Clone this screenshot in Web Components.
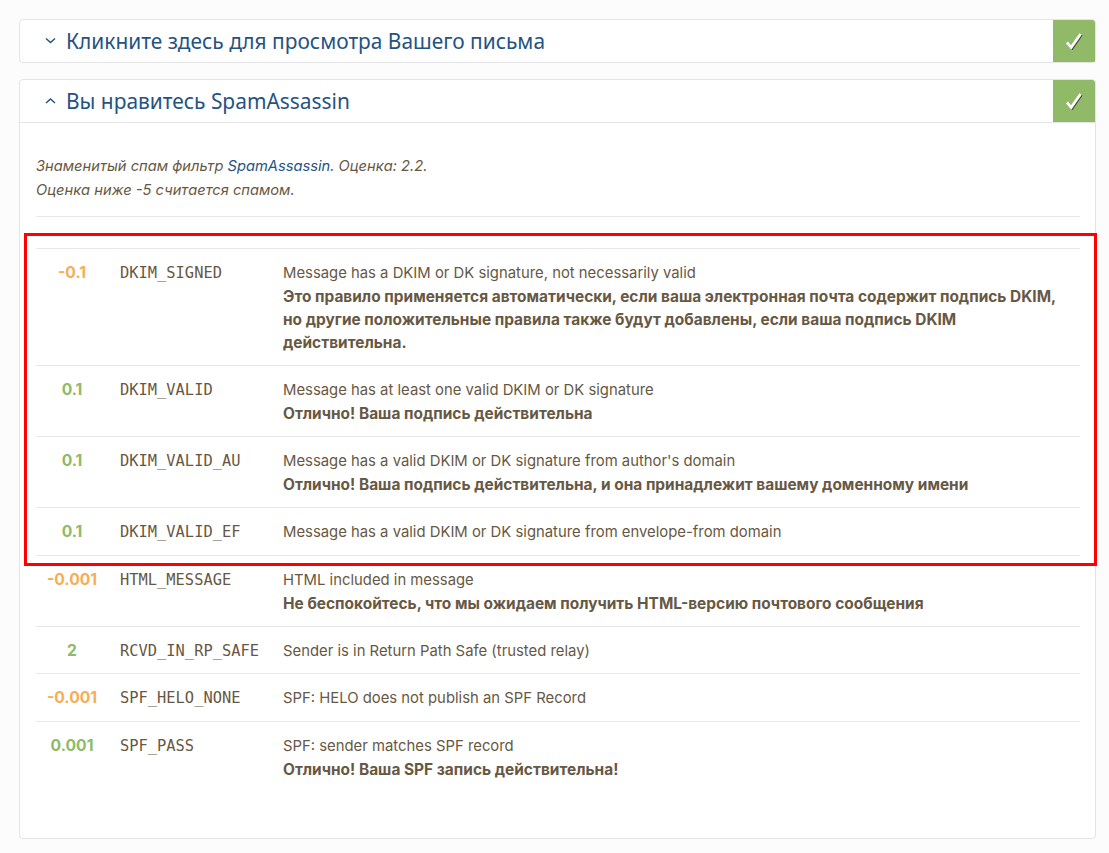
<!DOCTYPE html>
<html lang="ru">
<head>
<meta charset="utf-8">
<title>SpamAssassin</title>
<style>
  html, body { margin: 0; background: #fcfcfc; }
  body {
    height: 853px;
    overflow: hidden;
    font-family: Inter, "Liberation Sans", sans-serif;
    color: #675843;
  }
</style>
</head>
<body>
<test-page>
  <test-panel title="Кликните здесь для просмотра Вашего письма" collapsed></test-panel>
  <test-panel title="Вы нравитесь SpamAssassin">
    <score-intro>
      Знаменитый спам фильтр <a>SpamAssassin</a>. Оценка: 2.2.<br>
      Оценка ниже -5 считается спамом.
    </score-intro>
    <score-table>
      <score-row score="-0.1" rule="DKIM_SIGNED">
        Message has a DKIM or DK signature, not necessarily valid
        <b slot="note">Это правило применяется автоматически, если ваша электронная почта содержит подпись DKIM, но другие положительные правила также будут добавлены, если ваша подпись DKIM действительна.</b>
      </score-row>
      <score-row score="0.1" rule="DKIM_VALID">
        Message has at least one valid DKIM or DK signature
        <b slot="note">Отлично! Ваша подпись действительна</b>
      </score-row>
      <score-row score="0.1" rule="DKIM_VALID_AU">
        Message has a valid DKIM or DK signature from author's domain
        <b slot="note">Отлично! Ваша подпись действительна, и она принадлежит вашему доменному имени</b>
      </score-row>
      <score-row score="0.1" rule="DKIM_VALID_EF">
        Message has a valid DKIM or DK signature from envelope-from domain
      </score-row>
      <score-row score="-0.001" rule="HTML_MESSAGE">
        HTML included in message
        <b slot="note">Не беспокойтесь, что мы ожидаем получить HTML-версию почтового сообщения</b>
      </score-row>
      <score-row score="2" rule="RCVD_IN_RP_SAFE" tight>
        Sender is in Return Path Safe (trusted relay)
      </score-row>
      <score-row score="-0.001" rule="SPF_HELO_NONE">
        SPF: HELO does not publish an SPF Record
      </score-row>
      <score-row score="0.001" rule="SPF_PASS" last>
        SPF: sender matches SPF record
        <b slot="note">Отлично! Ваша SPF запись действительна!</b>
      </score-row>
    </score-table>
  </test-panel>
  <red-outline></red-outline>
</test-page>

<script>
class TestPage extends HTMLElement {
  constructor() {
    super();
    this.attachShadow({ mode: "open" });
    this.shadowRoot.innerHTML = `
      <style>
        :host {
          display: flex;
          flex-direction: column;
          gap: 16px;
          position: relative;
          padding: 19px 13px 0 19px;
        }
      </style>
      <slot></slot>
    `;
  }
}

class TestPanel extends HTMLElement {
  constructor() {
    super();
    this.attachShadow({ mode: "open" });
  }

  connectedCallback() {
    const title = this.getAttribute("title") || "";
    const collapsed = this.hasAttribute("collapsed");
    // chevron points down when closed, up when open
    const chevron = collapsed ? "M1 1.5l4.5 4 4.5-4" : "M1 6l4.5-4 4.5 4";

    this.shadowRoot.innerHTML = `
      <style>
        :host {
          display: block;
          background: #fff;
          border: 1px solid #e4e4e6;
          border-radius: 4px;
        }
        .head {
          display: flex;
          align-items: center;
          height: 42px;
        }
        :host(:not([collapsed])) .head { border-bottom: 1px solid #e4e4e6; }
        svg.chev { width: 11px; height: 8px; margin: 0 10px 0 25px; flex: none; }
        .title {
          flex: 1;
          font: 20.9px/42px "Noto Sans", sans-serif;
          color: #245381;
          white-space: nowrap;
        }
        .ok {
          width: 42px;
          height: 100%;
          background: #91ba68;
          border-top-right-radius: 3px;
          display: flex;
          align-items: center;
          justify-content: center;
        }
        .body { padding: 31px 15px 46px 16px; }
      </style>
      <div class="head">
        <svg class="chev" viewBox="0 0 11 8" fill="none" stroke="#245381" stroke-width="1.5"><path d="${chevron}"/></svg>
        <div class="title">${title}</div>
        <div class="ok">
          <svg width="18" height="18" viewBox="0 0 18 18" fill="none">
            <path d="M2 10.5l4.2 5L15.6 2" stroke="#3c4a2c" stroke-width="2.8" transform="translate(.8 .8)"/>
            <path d="M2 10.5l4.2 5L15.6 2" stroke="#fff" stroke-width="2.8"/>
          </svg>
        </div>
      </div>
      ${collapsed ? "" : '<div class="body"><slot></slot></div>'}
    `;
  }
}

class ScoreIntro extends HTMLElement {
  constructor() {
    super();
    this.attachShadow({ mode: "open" });
    this.shadowRoot.innerHTML = `
      <style>
        :host {
          display: block;
          font-size: 14.7px;
          line-height: 24px;
          font-style: italic;
          padding-bottom: 14px;
          border-bottom: 1px solid #e8e8e8;
          margin-bottom: 31px;
        }
        ::slotted(a) { color: #245381; }
      </style>
      <slot></slot>
    `;
  }
}

class ScoreTable extends HTMLElement {
  constructor() {
    super();
    this.attachShadow({ mode: "open" });
    this.shadowRoot.innerHTML = `
      <style>
        :host { display: block; border-top: 1px solid #e8e8e8; }
      </style>
      <slot></slot>
    `;
  }
}

class ScoreRow extends HTMLElement {
  constructor() {
    super();
    this.attachShadow({ mode: "open" });
  }

  connectedCallback() {
    const score = this.getAttribute("score") || "";
    const rule = this.getAttribute("rule") || "";
    const bad = score.startsWith("-");

    this.shadowRoot.innerHTML = `
      <style>
        :host {
          display: grid;
          grid-template-columns: 72px 151px 1fr;
          column-gap: 12px;
          padding: 13px 0 11px;
          border-bottom: 1px solid #e8e8e8;
          font-size: 14.85px;
          line-height: 23px;
        }
        :host([tight]) { padding-bottom: 10px; }
        :host([last]) { border-bottom: 0; }
        .score {
          text-align: center;
          font-size: 15.7px;
          font-weight: 700;
          margin-top: -1px;
          color: ${bad ? "#f6ad55" : "#8fba66"};
        }
        .rule {
          font-family: "DejaVu Sans Mono", monospace;
          font-size: 15.4px;
          white-space: nowrap;
        }
        .desc { padding-right: 20px; }
        ::slotted(b) { display: block; font-size: 15.45px; font-weight: 700; }
      </style>
      <div class="score">${score}</div>
      <div class="rule">${rule}</div>
      <div class="desc"><slot></slot><slot name="note"></slot></div>
    `;
  }
}

class RedOutline extends HTMLElement {
  constructor() {
    super();
    this.attachShadow({ mode: "open" });
    this.shadowRoot.innerHTML = `
      <style>
        :host {
          position: absolute;
          left: 24px;
          top: 233px;
          width: 1067px;
          height: 327px;
          border: 3px solid #f00;
          pointer-events: none;
        }
      </style>
    `;
  }
}

customElements.define("test-page", TestPage);
customElements.define("test-panel", TestPanel);
customElements.define("score-intro", ScoreIntro);
customElements.define("score-table", ScoreTable);
customElements.define("score-row", ScoreRow);
customElements.define("red-outline", RedOutline);
</script>
</body>
</html>
